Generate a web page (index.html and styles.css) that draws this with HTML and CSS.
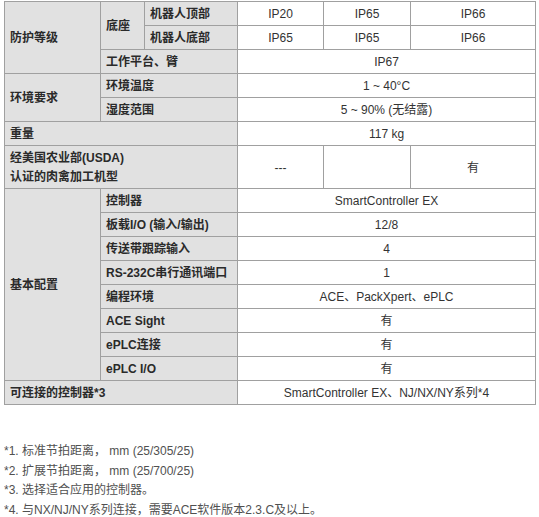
FILE: index.html
```html
<!DOCTYPE html>
<html lang="zh-CN">
<head>
<meta charset="utf-8">
<title>规格</title>
<link rel="stylesheet" href="styles.css">
</head>
<body>
<table class="spec">
  <colgroup>
    <col class="c1"><col class="c2"><col class="c3"><col class="d1"><col class="d2"><col class="d3">
  </colgroup>
  <tbody>
    <tr>
      <th rowspan="3">防护等级</th>
      <th rowspan="2">底座</th>
      <th>机器人顶部</th>
      <td>IP20</td><td>IP65</td><td>IP66</td>
    </tr>
    <tr>
      <th>机器人底部</th>
      <td>IP65</td><td>IP65</td><td>IP66</td>
    </tr>
    <tr>
      <th colspan="2">工作平台、臂</th>
      <td colspan="3">IP67</td>
    </tr>
    <tr>
      <th rowspan="2">环境要求</th>
      <th colspan="2">环境温度</th>
      <td colspan="3">1 ~ 40°C</td>
    </tr>
    <tr>
      <th colspan="2">湿度范围</th>
      <td colspan="3">5 ~ 90% (无结露)</td>
    </tr>
    <tr>
      <th colspan="3">重量</th>
      <td colspan="3">117 kg</td>
    </tr>
    <tr class="tall">
      <th colspan="3">经美国农业部(USDA)<br>认证的肉禽加工机型</th>
      <td>---</td><td></td><td>有</td>
    </tr>
    <tr>
      <th rowspan="8">基本配置</th>
      <th colspan="2">控制器</th>
      <td colspan="3">SmartController EX</td>
    </tr>
    <tr><th colspan="2">板载I/O (输入/输出)</th><td colspan="3">12/8</td></tr>
    <tr><th colspan="2">传送带跟踪输入</th><td colspan="3">4</td></tr>
    <tr><th colspan="2">RS-232C串行通讯端口</th><td colspan="3">1</td></tr>
    <tr><th colspan="2">编程环境</th><td colspan="3">ACE、PackXpert、ePLC</td></tr>
    <tr><th colspan="2">ACE Sight</th><td colspan="3">有</td></tr>
    <tr><th colspan="2">ePLC连接</th><td colspan="3">有</td></tr>
    <tr><th colspan="2">ePLC I/O</th><td colspan="3">有</td></tr>
    <tr>
      <th colspan="3">可连接的控制器*3</th>
      <td colspan="3">SmartController EX、NJ/NX/NY系列*4</td>
    </tr>
  </tbody>
</table>
<div class="notes">
  <p>*1. 标准节拍距离， mm (25/305/25)</p>
  <p>*2. 扩展节拍距离， mm (25/700/25)</p>
  <p>*3. 选择适合应用的控制器。</p>
  <p>*4. 与NX/NJ/NY系列连接，需要ACE软件版本2.3.C及以上。</p>
</div>
</body>
</html>
```

FILE: styles.css
```css
html, body {
  background: #ffffff;
}
body {
  margin: 0 0 0 4px;
  font-family: "Liberation Sans", Arial, "Noto Sans CJK SC", sans-serif;
  font-size: 12px;
  color: #333333;
}
.spec {
  margin-top: 1px;
  width: 531px;
  table-layout: fixed;
  border-collapse: collapse;
}
.c1 { width: 96px; }
.c2 { width: 44px; }
.c3 { width: 93px; }
.d1 { width: 86px; }
.d2 { width: 87px; }
.d3 { width: 125px; }
.spec tr {
  height: 24px;
}
.spec tr.tall {
  height: 43px;
}
.spec th,
.spec td {
  border: 1px solid #a0a0a0;
  padding: 3px 5px 1px;
  line-height: 19px;
  font-size: 12px;
  vertical-align: middle;
}
.spec th {
  background: #e1e1e1;
  text-align: left;
  font-weight: bold;
  color: #2a2a2a;
  white-space: nowrap;
}
.spec td {
  text-align: center;
  font-weight: normal;
  color: #333333;
}
.notes {
  margin-top: 37px;
  color: #505050;
}
.notes p {
  margin: 0;
  line-height: 19.5px;
}
```
